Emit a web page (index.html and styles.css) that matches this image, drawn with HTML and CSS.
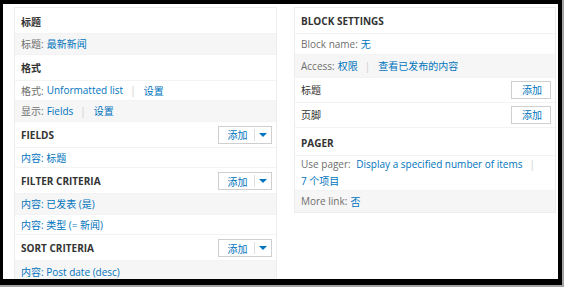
FILE: index.html
```html
<!DOCTYPE html>
<html lang="zh">
<head>
    <meta charset="UTF-8">
    <title>Views</title>
    <link rel="stylesheet" href="styles.css">
</head>
<body>
<div class="frame">
    <div class="screen">
        <div class="column">
            <div class="row head">标题</div>
            <div class="row item odd"><span class="label">标题:</span> <a>最新新闻</a></div>
            <div class="row head">格式</div>
            <div class="row item"><span class="label">格式:</span> <a>Unformatted list</a><span class="sep">|</span><a>设置</a></div>
            <div class="row item odd"><span class="label">显示:</span> <a>Fields</a><span class="sep">|</span><a>设置</a></div>
            <div class="row head split">
                <span>FIELDS</span>
                <span class="button"><span class="button-text">添加</span><span class="caret"></span></span>
            </div>
            <div class="row item"><a>内容: 标题</a></div>
            <div class="row head split">
                <span>FILTER CRITERIA</span>
                <span class="button"><span class="button-text">添加</span><span class="caret"></span></span>
            </div>
            <div class="row item odd"><a>内容: 已发表 (是)</a></div>
            <div class="row item"><a>内容: 类型 (= 新闻)</a></div>
            <div class="row head split">
                <span>SORT CRITERIA</span>
                <span class="button"><span class="button-text">添加</span><span class="caret"></span></span>
            </div>
            <div class="row item odd"><a>内容: Post date (desc)</a></div>
        </div>
        <div class="column">
            <div class="row head">BLOCK SETTINGS</div>
            <div class="row item"><span class="label">Block name:</span> <a>无</a></div>
            <div class="row item odd access"><span class="label">Access:</span> <a>权限</a><span class="sep">|</span><a>查看已发布的内容</a></div>
            <div class="row sub split">
                <span>标题</span>
                <span class="button small"><span class="button-text">添加</span></span>
            </div>
            <div class="row sub split">
                <span>页脚</span>
                <span class="button small"><span class="button-text">添加</span></span>
            </div>
            <div class="row head pager">PAGER</div>
            <div class="row item wrap"><span class="label">Use pager:</span> <a>Display a specified number of items</a><span class="sep">|</span><br><a>7 个项目</a></div>
            <div class="row item odd more"><span class="label">More link:</span> <a>否</a></div>
        </div>
    </div>
</div>
</body>
</html>
```

FILE: styles.css
```css
html, body {
    margin: 0;
    padding: 0;
}

body {
    background-color: #a3a3a3;
    width: 564px;
    height: 287px;
    font-family: "Open Sans", "Noto Sans CJK SC", sans-serif;
    font-size: 10px;
    color: #333;
}

.frame {
    width: 555px;
    height: 275px;
    background-color: #000;
    border-style: solid;
    border-color: #000;
    border-width: 4px 4px 6px 3px;
}

.screen {
    box-sizing: border-box;
    height: 275px;
    overflow: hidden;
    background-color: #fff;
    padding: 3px 2px 0 11px;
    display: grid;
    grid-template-columns: 263px 262px;
    column-gap: 17px;
    align-items: start;
}

.column {
    border: 1px solid #ededed;
    border-bottom: none;
    display: flex;
    flex-direction: column;
}

.column:last-child {
    border-bottom: 1px solid #ededed;
}

.row {
    box-sizing: border-box;
    flex: none;
    display: flex;
    align-items: center;
    padding: 0 6px;
    border-bottom: 1px solid #f3f3f3;
}

.row:last-child {
    border-bottom: none;
}

.head {
    height: 26px;
    padding-top: 1px;
    font-weight: 700;
    color: #333;
}

.sub {
    height: 25px;
    color: #333;
}

.pager {
    height: 28px;
    padding-top: 4px;
}

.split {
    justify-content: space-between;
    padding-right: 4px;
}

.item {
    height: 20.5px;
}

.item.access {
    height: 23px;
}

.item.more {
    height: 21px;
}

.item.wrap {
    display: block;
    height: 35px;
    padding-top: 0;
    line-height: 17px;
}

.odd {
    background-color: #f6f6f6;
}

.label {
    color: #6e6e6e;
    margin-right: 3px;
}

a {
    color: #0074bd;
}

.sep {
    color: #ccc;
    margin: 0 8px 0 7px;
}

.button {
    box-sizing: border-box;
    display: flex;
    align-items: center;
    width: 54px;
    height: 18px;
    border: 1px solid #cfcfcf;
    background-color: #fff;
    color: #0074bd;
    font-weight: 400;
}

.button-text {
    flex: 1;
    text-align: center;
    padding-left: 2px;
}

.caret {
    width: 16px;
    height: 12px;
    border-left: 1px solid #dedede;
    display: flex;
    align-items: center;
    justify-content: center;
}

.caret::after {
    content: "";
    border-left: 4px solid transparent;
    border-right: 4px solid transparent;
    border-top: 4px solid #0074bd;
}

.button.small {
    width: 40px;
}
```
